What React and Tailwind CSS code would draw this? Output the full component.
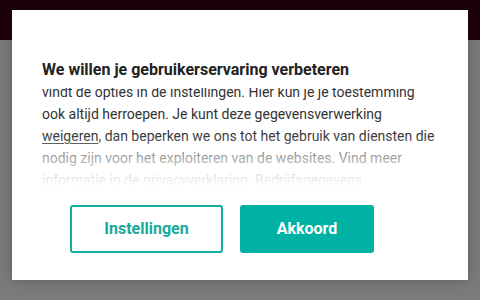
import { X } from 'lucide-react'

export default function App() {
  return (
    <div className="relative w-[480px] h-[300px] overflow-hidden bg-[#7b7b7b] font-['Roboto',sans-serif]">
      {/* page header behind the overlay */}
      <div className="h-[40px] bg-[#1d0309] flex justify-end items-start pr-[8px] pt-[8px]">
        <X size={22} strokeWidth={2} className="text-[#4a3a3e]" />
      </div>

      {/* consent dialog */}
      <div className="absolute left-[12px] top-[10px] w-[456px] bg-white shadow-[0_0_12px_rgba(0,0,0,0.25)] px-[30px] pt-[49px] pb-[27px]">
        <h2 className="text-[16px] leading-[22px] font-bold text-[#222] whitespace-nowrap">
          We willen je gebruikerservaring verbeteren
        </h2>

        {/* scrolled text area, cut at the top and faded at the bottom */}
        <div className="relative mt-[7px] h-[98px] overflow-hidden">
          <p className="-mt-[51px] text-[14px] leading-[22px] text-[#333] whitespace-nowrap">
            Wij en onze partners gebruiken cookies om de websites te<br />
            verbeteren en content te personaliseren. Meer informatie<br />
            vindt de opties in de instellingen. Hier kun je je toestemming<br />
            ook altijd herroepen. Je kunt deze gegevensverwerking<br />
            <span className="underline underline-offset-2">weigeren</span>, dan beperken we ons tot het gebruik van diensten die<br />
            nodig zijn voor het exploiteren van de websites. Vind meer<br />
            informatie in de privacyverklaring. Bedrijfsgegevens
          </p>
          <div className="absolute inset-x-0 bottom-0 h-[52px] bg-gradient-to-b from-white/0 via-white/60 to-white" />
        </div>

        <div className="mt-[19px] pl-[28px] flex gap-[17px]">
          <button className="w-[153px] h-[48px] border-2 border-[#12ada1] rounded-[3px] text-[16px] font-bold text-[#17a99d]">
            Instellingen
          </button>
          <button className="w-[134px] h-[48px] bg-[#00b2a3] rounded-[3px] text-[16px] font-bold text-white">
            Akkoord
          </button>
        </div>
      </div>
    </div>
  )
}
